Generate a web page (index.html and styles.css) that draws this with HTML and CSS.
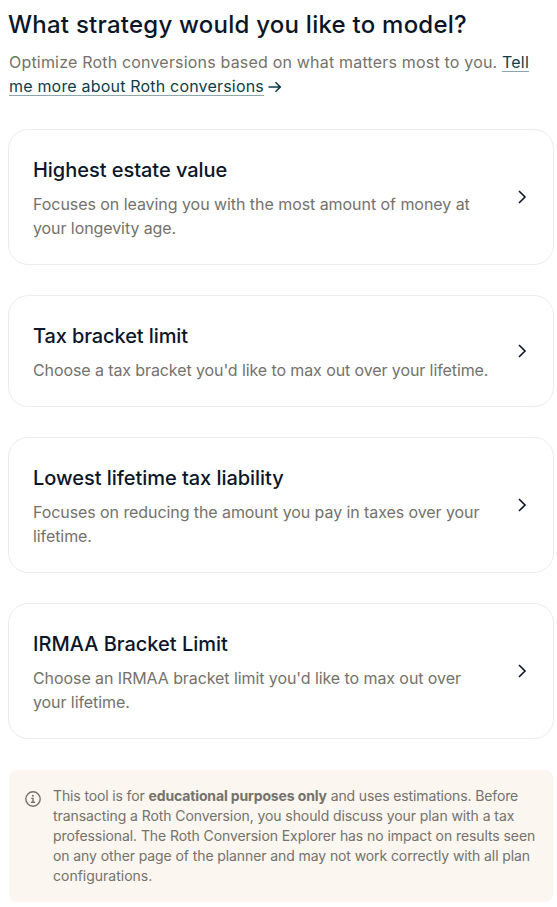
FILE: index.html
```html
<!DOCTYPE html>
<html lang="en">

<head>
    <meta charset="UTF-8">
    <meta name="viewport" content="width=device-width, initial-scale=1.0">
    <title>Roth Conversion Explorer</title>
    <link rel="stylesheet" href="styles.css">
</head>

<body>

    <h1 class="title">What strategy would you like to model?</h1>
    <p class="intro">
        Optimize Roth conversions based on what matters most to you. <a href="#" class="link">Tell<br>
        me more about Roth conversions</a>
        <svg class="arrow" width="14" height="12" viewBox="0 0 14 12"><path d="M.5 6h11.5M7.5 1.2L12.3 6 7.5 10.8" /></svg>
    </p>

    <div class="cards">
        <button class="card">
            <span class="card-text">
                <b class="card-title t1">Highest estate value</b>
                <span class="desc d1">Focuses on leaving you with the most amount of money at</span>
                <span class="desc">your longevity age.</span>
            </span>
            <svg class="chevron" width="10" height="16" viewBox="0 0 10 16"><path d="M2 2l6 6-6 6" /></svg>
        </button>
        <button class="card">
            <span class="card-text">
                <b class="card-title t2">Tax bracket limit</b>
                <span class="desc d2">Choose a tax bracket you'd like to max out over your lifetime.</span>
            </span>
            <svg class="chevron" width="10" height="16" viewBox="0 0 10 16"><path d="M2 2l6 6-6 6" /></svg>
        </button>
        <button class="card">
            <span class="card-text">
                <b class="card-title t1">Lowest lifetime tax liability</b>
                <span class="desc">Focuses on reducing the amount you pay in taxes over your</span>
                <span class="desc">lifetime.</span>
            </span>
            <svg class="chevron" width="10" height="16" viewBox="0 0 10 16"><path d="M2 2l6 6-6 6" /></svg>
        </button>
        <button class="card">
            <span class="card-text">
                <b class="card-title">IRMAA Bracket Limit</b>
                <span class="desc">Choose an IRMAA bracket limit you'd like to max out over</span>
                <span class="desc">your lifetime.</span>
            </span>
            <svg class="chevron" width="10" height="16" viewBox="0 0 10 16"><path d="M2 2l6 6-6 6" /></svg>
        </button>
    </div>

    <div class="note">
        <svg class="info" width="16" height="16" viewBox="0 0 16 16">
            <circle cx="8" cy="8" r="7.2" />
            <path d="M6.2 7.4H8v3.8M5.9 11.3h4.2" />
            <circle class="dot" cx="7.9" cy="4.8" r="1" />
        </svg>
        <p class="note-text">
            <span class="n1">This tool is for <b>educational purposes only</b> and uses estimations. Before</span><br>
            <span class="n2">transacting a Roth Conversion, you should discuss your plan with a tax</span><br>
            <span class="n2">professional. The Roth Conversion Explorer has no impact on results seen</span><br>
            <span class="n3">on any other page of the planner and may not work correctly with all plan</span><br>
            <span>configurations.</span>
        </p>
    </div>

</body>

</html>
```
FILE: styles.css
```css
* {
    box-sizing: border-box;
}

body {
    margin: 0;
    padding: 9px 3px 0 8px;
    background-color: white;
    color: #0b1628;
    font-family: Inter, "Liberation Sans", sans-serif;
    white-space: nowrap;
}

.title {
    margin: 0;
    font-size: 24px;
    font-weight: 500;
    line-height: 32px;
    letter-spacing: 0.24px;
}

.intro {
    margin: 9px 0 0 1px;
    font-size: 16px;
    line-height: 24px;
    letter-spacing: 0.19px;
    color: #74726a;
}

.link {
    color: #0d3d4a;
    text-decoration: underline;
    text-decoration-color: #8ea6ad;
    text-decoration-thickness: 1px;
    text-underline-offset: 3px;
}

.arrow,
.chevron,
.info {
    flex-shrink: 0;
    fill: none;
    stroke: #0b1628;
    stroke-width: 1.6;
}

.arrow {
    margin-left: -1px;
    vertical-align: -1px;
    stroke: #0d3d4a;
}

.cards {
    margin-top: 31px;
    display: flex;
    flex-direction: column;
    gap: 30px;
}

.card {
    display: flex;
    align-items: center;
    justify-content: space-between;
    padding: 23px 26px 24px 24px;
    border: 1px solid #ececec;
    border-radius: 20px;
    background-color: white;
    font-family: inherit;
    text-align: left;
    color: inherit;
}

.card-text {
    display: flex;
    flex-direction: column;
}

.card-title {
    margin-bottom: 5px;
    font-size: 20px;
    font-weight: 500;
    line-height: 34px;
}

.t1 {
    letter-spacing: -0.04px;
}

.t2 {
    letter-spacing: -0.1px;
}

.desc {
    font-size: 16px;
    line-height: 24px;
    letter-spacing: -0.08px;
    color: #74726a;
}

.d1 {
    letter-spacing: -0.055px;
}

.d2 {
    letter-spacing: -0.1px;
}

.note {
    margin: 31px 1px 0;
    display: flex;
    gap: 12px;
    padding: 16px;
    border-radius: 8px;
    background-color: #fbf6f0;
    color: #74726a;
}

.info {
    margin-top: 5px;
    stroke: #74726a;
    stroke-width: 1.4;
}

.dot {
    fill: #74726a;
    stroke: none;
}

.note-text {
    margin: 0;
    font-size: 14px;
    line-height: 20px;
}

.n1 {
    letter-spacing: -0.13px;
}

.n2 {
    letter-spacing: -0.08px;
}

.n3 {
    letter-spacing: -0.095px;
}
```
